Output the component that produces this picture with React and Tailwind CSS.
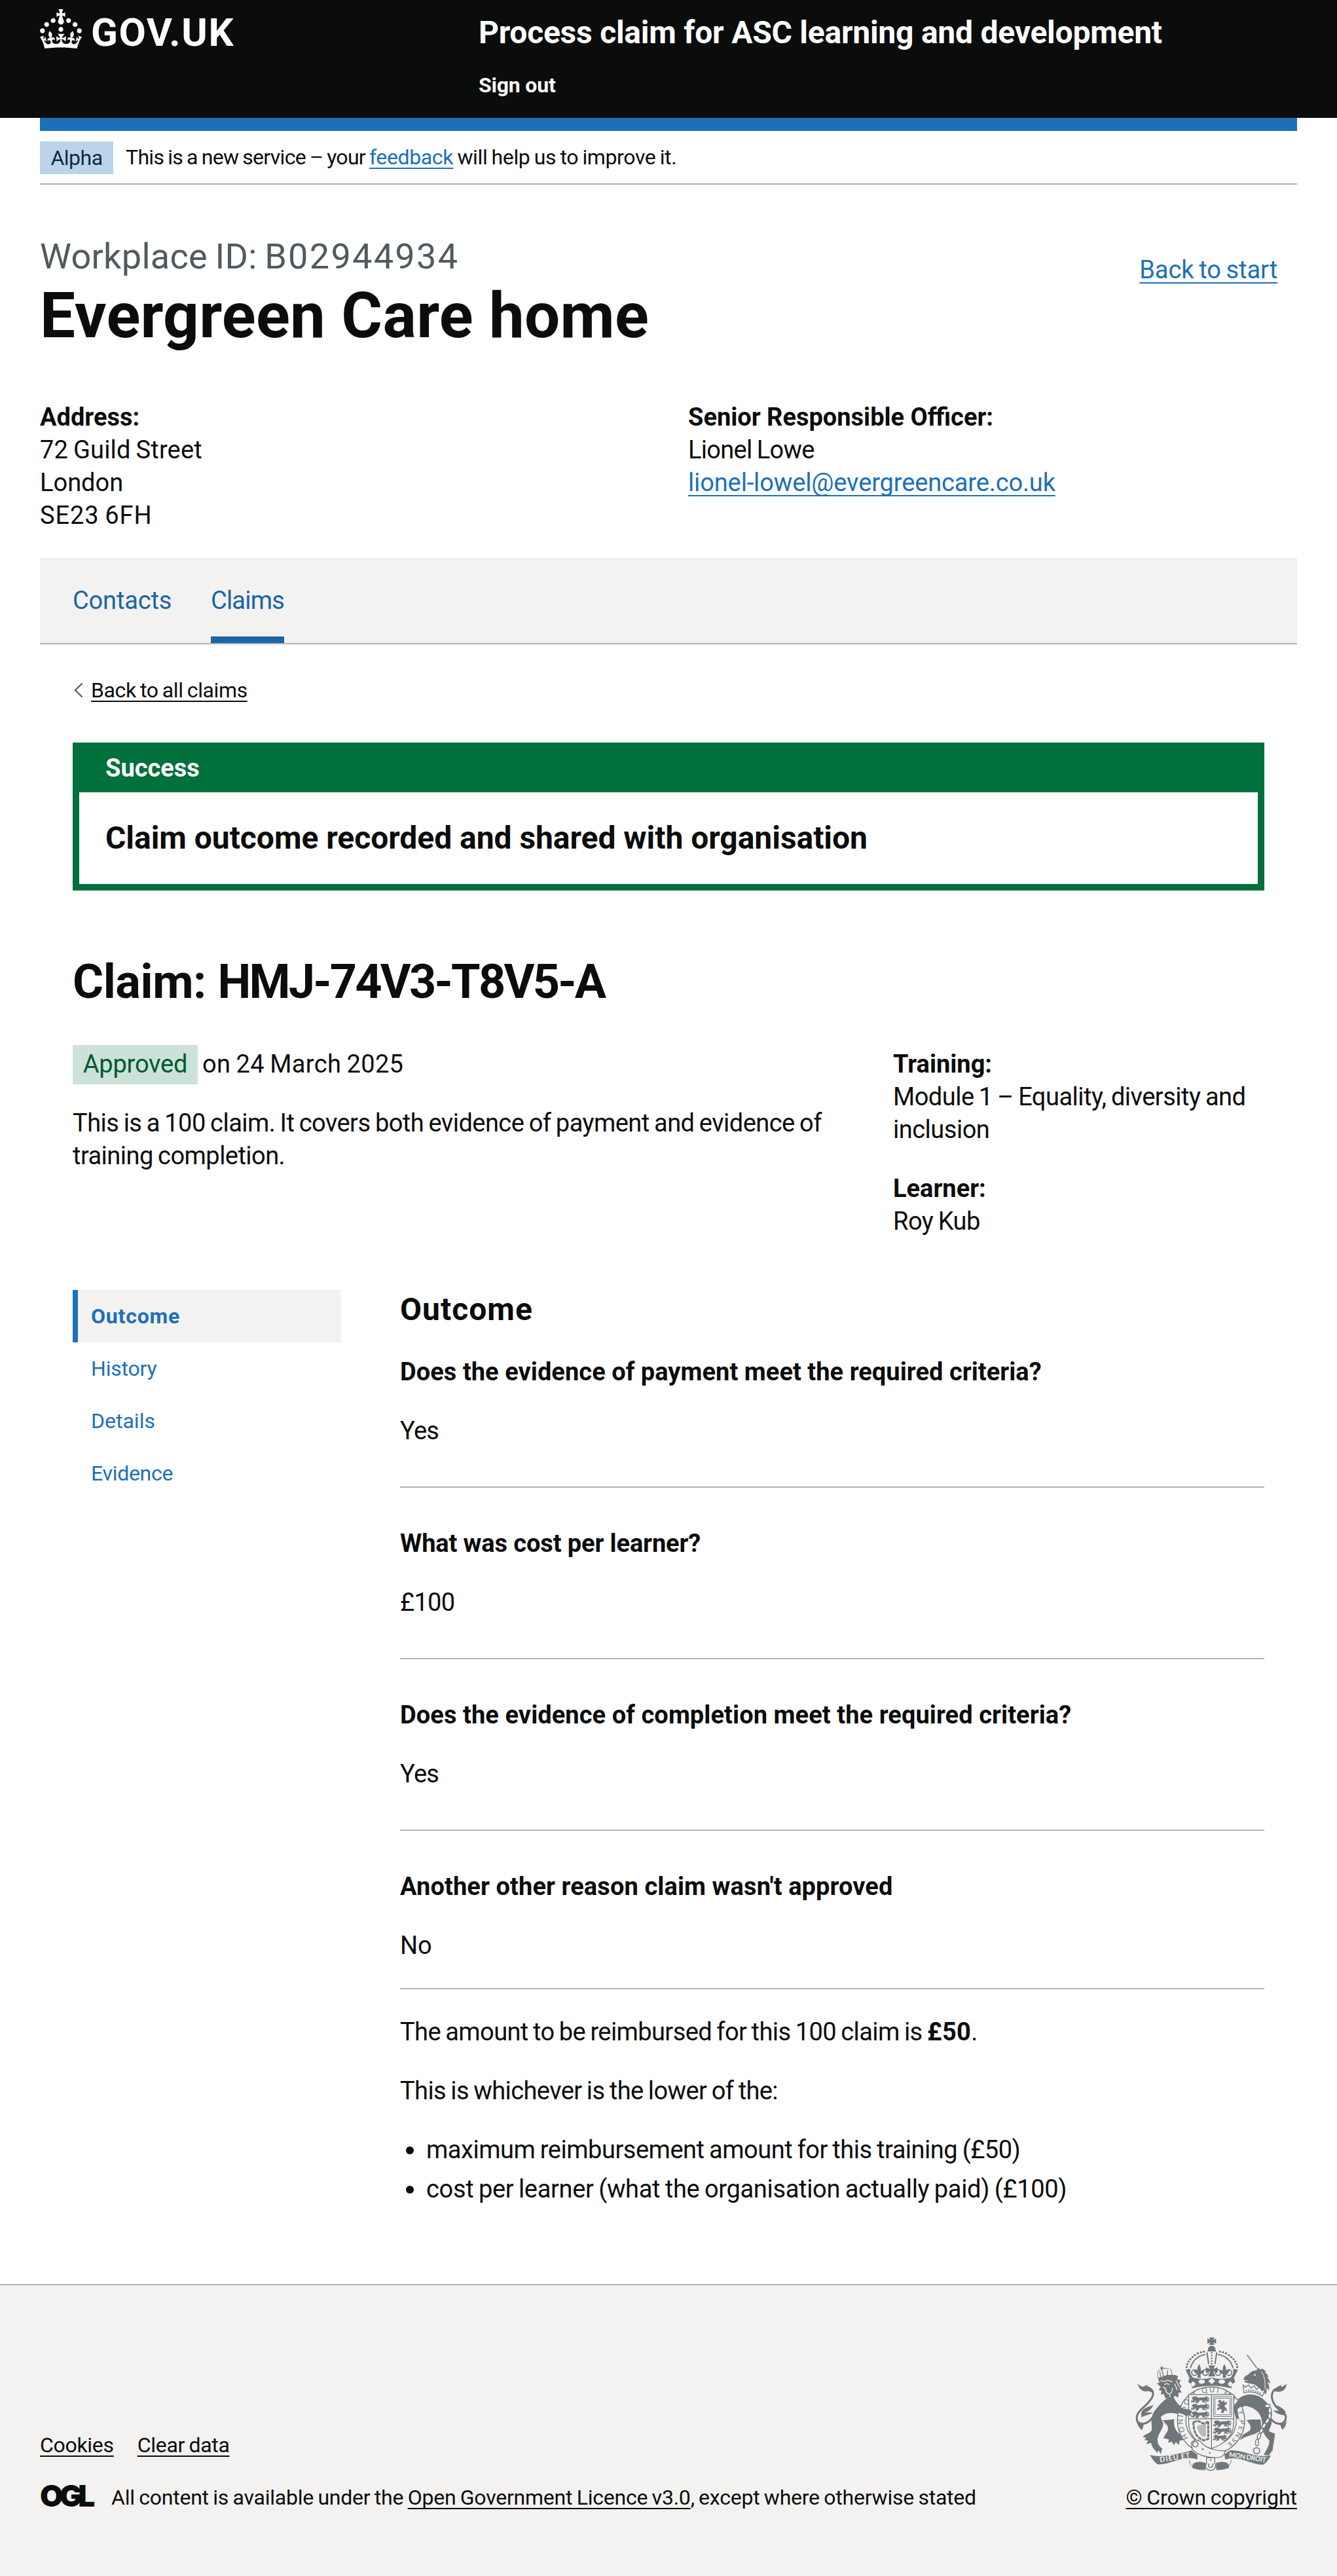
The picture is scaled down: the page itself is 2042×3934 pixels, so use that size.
import React from "react";

const NAV = [
  { label: "History", track: "tracking-[-0.2px]" },
  { label: "Details", track: "tracking-[0px]" },
  { label: "Evidence", track: "tracking-[-0.3px]" },
];

const QUESTIONS = [
  { q: "Does the evidence of payment meet the required criteria?", a: "Yes", track: "tracking-[0.05px]" },
  { q: "What was cost per learner?", a: "£100", track: "tracking-[-0.12px]" },
  { q: "Does the evidence of completion meet the required criteria?", a: "Yes", track: "tracking-[0.08px]" },
];

const LINK = "underline decoration-2 [text-decoration-skip-ink:none]";

function Crown() {
  return (
    <svg viewBox="0 0 32 30" width="64" height="60" fill="currentColor" aria-hidden="true">
      <path d="M22.6 10.4c-1 .4-2-.1-2.4-1-.4-.9.1-2 1-2.4.9-.4 2 .1 2.4 1s-.1 2-1 2.4m-5.9 6.7c-.9.4-2-.1-2.4-1-.4-.9.1-2 1-2.4.9-.4 2 .1 2.4 1s-.1 2-1 2.4m10.8-3.7c-1 .4-2-.1-2.4-1-.4-.9.1-2 1-2.4.9-.4 2 .1 2.4 1s0 2-1 2.4m3.3 4.8c-1 .4-2-.1-2.4-1-.4-.9.1-2 1-2.4.9-.4 2 .1 2.4 1s-.1 2-1 2.4M17 4.7l2.3 1.2V2.5l-2.3.7-.2-.2.9-3h-3.4l.9 3-.2.2c-.1.1-2.3-.7-2.3-.7v3.4L15 4.7c.1.1.1.2.2.2l-1.3 4c-.1.2-.1.4-.1.6 0 1.1.8 2 1.9 2.2h.7c1-.2 1.9-1.1 1.9-2.1 0-.2 0-.4-.1-.6l-1.3-4c-.1-.2 0-.2.1-.3m-7.6 5.7c.9.4 2-.1 2.4-1 .4-.9-.1-2-1-2.4-.9-.4-2 .1-2.4 1s0 2 1 2.4m-5 3c.9.4 2-.1 2.4-1 .4-.9-.1-2-1-2.4-.9-.4-2 .1-2.4 1s.1 2 1 2.4m-3.2 4.8c.9.4 2-.1 2.4-1 .4-.9-.1-2-1-2.4-.9-.4-2 .1-2.4 1s0 2 1 2.4m14.8 11c4.4 0 8.6.3 12.3.8 1.1-4.5 2.4-7 3.7-8.8l-2.5-.9c.2 1.3.3 1.9 0 2.7-.4-.4-.8-1.1-1.1-2.3l-1.2 4c.7-.5 1.3-.8 2-.9-1.1 2.5-2.6 3.1-3.5 3-1.1-.2-1.7-1.2-1.5-2.1.3-1.2 1.5-1.5 2.1-.1 1.1-2.3-.8-3-2-2.3 1.9-1.9 2.1-3.5.6-5.6-2.1 1.6-2.1 3.2-1.2 5.5-1.2-1.4-3.2-.6-2.5 1.6.9-1.4 2.1-.5 1.9.8-.2 1.1-1.7 2.1-3.5 1.9-2.7-.2-2.9-2.1-2.9-3.6.7-.1 1.9.5 2.9 1.9l.4-4.3c-1.1 1.1-2.1 1.4-3.2 1.4.4-1.2 2.1-3 2.1-3h-5.4s1.7 1.9 2.1 3c-1.1 0-2.1-.2-3.2-1.4l.4 4.3c1-1.4 2.2-2 2.9-1.9-.1 1.5-.2 3.4-2.9 3.6-1.9.2-3.4-.8-3.5-1.9-.2-1.3 1-2.2 1.9-.8.7-2.3-1.2-3-2.5-1.6.9-2.2.9-3.9-1.2-5.5-1.5 2-1.3 3.7.6 5.6-1.2-.7-3.1 0-2 2.3.6-1.4 1.8-1.1 2.1.1.2.9-.3 1.9-1.5 2.1-.9.2-2.4-.5-3.5-3 .6 0 1.2.3 2 .9l-1.2-4c-.3 1.1-.7 1.9-1.1 2.3-.3-.8-.2-1.4 0-2.7l-2.9.9C1.3 23 2.6 25.5 3.7 30c3.7-.5 7.9-.8 12.3-.8" />
    </svg>
  );
}

/* One walking lion of the shield's quarters, about 84 units wide. */
function Passant({ x, y }) {
  return (
    <g transform={`translate(${x} ${y})`}>
      <path d="M2 8l8-8 14 0 7 6 12-2 18 0 8-5 7 4-4 6 6 8-8 6-7-5-3 9h-12l5-8-14-1-7 10h-12l6-9-7 1-9 8-7-4 7-7z" />
      <path d="M66 8c6 4 8-6 14-3M4 16l-3 8 7 0M24 20l-3 8h9M60 22l3 5h9M80 6v12l-6 6" fill="none" stroke="#6f777b" strokeWidth="4" />
    </g>
  );
}

function CoatOfArms() {
  const ink = "#6f777b";
  const paper = "#f3f2f1";
  const pearls = [[341, 226], [344, 213], [350, 201], [358, 190], [368, 180], [379, 171], [392, 163], [406, 158], [420, 155]];
  return (
    <svg viewBox="103 88 702 616" width="234" height="205" fill={ink} aria-hidden="true">
      {/* cross and orb */}
      <path d="M443 90h26l-7 12 14-7v24l-14-7 7 12h-26l7-12-14 7V95l14 7z" />
      <path d="M439 145c0-22 34-22 34 0l3 10h-40z" />
      {/* arches */}
      {pearls.map(([x, y]) => (
        <g key={x}>
          <circle cx={x} cy={y} r="5" />
          <circle cx={914 - x} cy={y} r="5" />
        </g>
      ))}
      <path d="M358 230c10-32 34-56 70-62M554 230c-10-32-34-56-70-62" fill="none" stroke={ink} strokeWidth="6" />
      <path d="M434 158l8 54M479 158l-8 54" stroke={ink} strokeWidth="6" />
      <path d="M447 155h18v58h-18z" fill={paper} />
      {[160, 173, 186, 199, 211].map((y) => <circle key={y} cx="456" cy={y} r="4" />)}
      {/* crown rim, fleurs-de-lis and cross */}
      <path d="M336 238l22-4-1 20 12 20q44 12 87 0q44 12 87 0l12-20-1-20 22 4-18 38 6 18-14 10-4 20q-90-24-180 0l-4-20-14-10 6-18z" />
      <circle cx="377" cy="251" r="13" fill={paper} stroke={ink} strokeWidth="5" />
      <circle cx="427" cy="251" r="13" fill={paper} stroke={ink} strokeWidth="5" />
      <circle cx="485" cy="251" r="13" fill={paper} stroke={ink} strokeWidth="5" />
      <circle cx="535" cy="251" r="13" fill={paper} stroke={ink} strokeWidth="5" />
      <path d="M398 213q10 16 8 32 6-10 14-4 4 10-8 14l-8 4 2 16h-16l2-16-8-4q-12-4-8-14 8-6 14 4-2-16 8-32zM514 213q10 16 8 32 6-10 14-4 4 10-8 14l-8 4 2 16h-16l2-16-8-4q-12-4-8-14 8-6 14 4-2-16 8-32z" />
      <path d="M440 219h32l-9 16 20-8v26l-20-8 9 24h-32l9-24-20 8v-26l20 8z" />
      <g fill={paper}>
        <ellipse cx="410" cy="293" rx="15" ry="10" />
        <ellipse cx="502" cy="293" rx="15" ry="10" />
        <path d="M456 276l16 14-16 14-16-14zM371 290l12 14-14 14-9-16zM541 290l-12 14 14 14 9-16z" />
      </g>

      {/* lion */}
      <path d="M184 458C160 492 128 492 114 474C104 440 130 424 152 402C180 376 196 348 180 330C172 320 156 316 144 318" fill="none" stroke={ink} strokeWidth="9" />
      <path d="M116 300Q128 316 142 316L164 306L156 318Q184 326 190 350Q172 332 150 338Q120 332 116 300zM132 436C144 410 164 412 188 400C180 420 164 430 150 434L186 434C170 448 148 444 134 458zM108 462Q120 484 146 484L136 516Q114 500 108 462z" />
      <path d="M252 366C222 394 196 418 184 446C174 474 184 498 180 516C172 534 148 530 140 548L156 550L146 562L164 562L156 580L178 574C182 598 196 606 206 620L212 608L222 626L226 610L230 600C214 590 204 574 208 552C214 526 230 514 234 486L222 456C240 434 276 432 300 442L330 452L352 448L362 430L342 420C316 410 296 396 282 366z" />
      <path d="M230 470L284 466C280 494 288 514 304 530L330 542L318 552L328 560L308 564L306 584L292 570L282 584L272 568L256 574L260 558L234 552L246 530C256 522 258 508 252 494z" />
      <path d="M204 300L216 298L210 278L250 262L290 262L302 270L296 280L314 288L306 300L318 316L308 324L318 344L304 342L302 366L286 358L276 374L260 366L242 368L236 350L222 352L226 336L212 330L222 318z" />
      <path d="M220 288L240 292L254 286L276 294M238 306L250 302L262 306M232 318L242 322L248 340Q258 356 272 342L276 322M286 302L298 332M292 288L308 318M262 350L266 364" fill="none" stroke={paper} strokeWidth="4" />
      <path d="M210 274C206 256 208 244 216 240M272 262C274 248 270 238 262 234M222 238C230 230 250 230 260 236" fill="none" stroke={ink} strokeWidth="5" strokeDasharray="5 3" />
      <path d="M227 220V244M219 230H235M230 244L234 270M222 272L218 248M252 264L254 242" stroke={ink} strokeWidth="4" fill="none" />
      <path d="M209 276L270 261L272 269L212 285z" />

      {/* unicorn */}
      <path d="M619 171L664 232" stroke={ink} strokeWidth="6" strokeDasharray="7 2" />
      <path d="M602 282Q606 266 620 262L640 246L662 240L672 228L680 242Q702 256 704 290Q706 318 696 338L680 332Q668 312 646 304L622 300Q606 296 604 290L628 288L606 286z" />
      <path d="M682 234Q700 236 706 250L696 248Q714 258 718 274L706 268Q724 286 724 302L710 292Q724 316 718 332L706 320Q712 340 702 352L694 340Q704 280 676 246z" />
      <path d="M684 246Q706 278 700 334" fill="none" stroke={paper} strokeWidth="3" />
      <circle cx="654" cy="262" r="4" fill={paper} />
      <path d="M600 308L612 318L624 308L636 322L650 312L662 328L676 318L686 334L700 330L688 360Q650 330 604 344z" fill={paper} stroke={ink} strokeWidth="4" />
      <path d="M612 334Q650 326 684 348" fill="none" stroke={ink} strokeWidth="5" strokeDasharray="6 5" />
      <path d="M560 402C568 374 594 356 626 352C676 348 712 384 730 424C738 452 728 468 712 480L688 484C684 452 676 430 638 412C614 402 586 398 578 418C584 440 588 454 578 474L564 464C558 444 558 422 560 402z" />
      <path d="M616 470C640 464 660 468 680 466L684 510C664 540 622 534 584 562L598 538L632 516C638 500 632 486 616 470z" />
      <path d="M690 470L730 464C736 488 722 504 718 520L746 532C744 562 738 580 736 606L718 632L694 630C704 608 722 590 720 562C702 546 692 528 684 502z" />
      <path d="M722 456C744 492 782 496 794 468C806 434 768 432 750 406C734 386 724 356 740 334C750 320 768 324 780 320" fill="none" stroke={ink} strokeWidth="9" />
      <path d="M800 303Q796 340 760 340L740 336Q756 314 776 308L774 320zM796 432Q776 404 740 398Q752 418 768 426L738 426Q756 444 790 448zM800 470Q790 490 768 486L780 514Q798 500 800 470z" />
      <g fill={paper} stroke={ink} strokeWidth="4">
        <ellipse cx="712" cy="404" rx="12" ry="8" />
        <ellipse cx="723" cy="425" rx="7" ry="13" />
        <ellipse cx="722" cy="450" rx="7" ry="13" />
        <ellipse cx="711" cy="473" rx="7" ry="13" transform="rotate(28 711 473)" />
        <ellipse cx="696" cy="495" rx="7" ry="13" transform="rotate(28 696 495)" />
        <ellipse cx="684" cy="518" rx="7" ry="12" transform="rotate(20 684 518)" />
        <ellipse cx="673" cy="543" rx="7" ry="14" transform="rotate(20 673 543)" />
        <ellipse cx="664" cy="573" rx="7" ry="15" />
      </g>

      {/* garter with its motto */}
      <circle cx="453" cy="471" r="154" fill={paper} stroke={ink} strokeWidth="4" />
      <circle cx="453" cy="471" r="116" fill="none" stroke={ink} strokeWidth="4" />
      <defs>
        <path id="garter" d="M350 550A130 130 0 1 1 520 583" />
      </defs>
      <text fontFamily="Lato, sans-serif" fontSize="33" fontWeight="400" fill={ink}>
        <textPath href="#garter" textLength="620">HONI SOIT QUI MAL Y PENSE</textPath>
      </text>

      {/* shield */}
      <path d="M350 352h207v128c0 64-50 104-103 120-54-16-104-56-104-120z" fill={paper} stroke={ink} strokeWidth="4" />
      <path d="M455 352v248M350 463h207" stroke={ink} strokeWidth="4" />
      <Passant x={362} y={361} />
      <Passant x={362} y={395} />
      <Passant x={362} y={430} />
      <Passant x={463} y={471} />
      <Passant x={463} y={504} />
      <g transform="translate(463 537) scale(.75 .92)">
        <Passant x={0} y={0} />
      </g>
      <path d="M464 361h83v92h-83zM471 369h69v76h-69z" fill="none" stroke={ink} strokeWidth="3" />
      <path d="M484 382l12-6 6 10 10-8 4 12 12-6-6 14-10 6 10 10 6 16-12-6-8 14-10-4 6-12-12-4-10 8-2-10 12-8-10-6 4-8 10 4z" />
      <path d="M372 480Q392 468 408 480T440 474V556L420 562Q372 548 372 480z" fill="none" stroke={ink} strokeWidth="9" strokeDasharray="16 3" />
      <path d="M388 496L430 486V542L418 548Q392 532 388 496z" opacity=".45" />

      {/* forelegs resting on the shield */}
      <path d="M278 396L330 418L358 422L368 432L358 440L364 450L346 446L340 452L328 444L284 428z" />
      <path d="M560 402C564 392 578 374 590 374L610 378L604 408C582 408 578 414 574 424L582 468L568 458C560 440 556 422 560 402z" />

      {/* belt and buckle */}
      <path d="M362 578c4-20 34-22 46-6 22 26 58 38 110 38-2 22-20 32-46 32-48-2-80-14-104-36z" fill={paper} stroke={ink} strokeWidth="4" />
      <circle cx="381" cy="580" r="12" fill="none" stroke={ink} strokeWidth="5" />
      <circle cx="415" cy="603" r="4" />
      <circle cx="447" cy="620" r="4" />

      {/* motto ribbon */}
      <path d="M172 630Q216 640 280 628T362 608L390 628V650Q350 636 290 656T206 672Q190 660 172 630zM728 632Q684 640 630 624T540 608L514 628L518 650Q556 636 620 658T696 672Q712 660 728 632z" />
      <path d="M368 690c-8-28 28-34 60-24v28c-20 4-42 2-60-4zM534 690c8-28-24-34-58-24v28c20 4 40 2 58-4z" />
      <path d="M354 652c0 26 12 46 74 46M546 652c-4 26-20 46-70 46" fill="none" stroke={ink} strokeWidth="3" />
      <path d="M432 642h38v26c10 16-2 32-19 32s-30-16-19-32z" fill={paper} stroke={ink} strokeWidth="4" />
      <path d="M441 668c-4 26 24 26 20 0" fill="none" stroke={ink} strokeWidth="5" />
      <circle cx="451" cy="652" r="4" />
      <g fontFamily="Lato, sans-serif" fontWeight="700" fill={paper}>
        <text x="219" y="663" fontSize="33" textLength="140" transform="rotate(-9 219 663)">DIEU ET</text>
        <text x="534" y="637" fontSize="31" textLength="172" transform="rotate(9 534 637)">MON DROIT</text>
      </g>
      <circle cx="662" cy="610" r="14" fill="none" stroke={ink} strokeWidth="5" />
    </svg>
  );
}

function Header() {
  return (
    <header className="h-[180px] bg-[#0b0c0c] text-white">
      <div className="mx-[61px] flex">
        <div className="flex w-[670px] items-start pt-[14px]">
          <Crown />
          <span className="ml-[14px] text-[60px] font-bold leading-[72px] tracking-[1.6px]">GOV.UK</span>
        </div>
        <div className="pt-5 font-bold">
          <div className="text-[48px] leading-[60px] tracking-[-0.24px]">Process claim for ASC learning and development</div>
          <a className="mt-[30px] block text-[32px] leading-10 tracking-[-0.2px]">Sign out</a>
        </div>
      </div>
    </header>
  );
}

function PhaseBanner() {
  return (
    <div className="mx-[61px] border-b-2 border-[#b1b4b6]">
      <div className="h-5 bg-[#1d70b8]" />
      <div className="mt-4 mb-[14px] flex h-[50px] items-center text-[32px] [word-spacing:-0.04em]">
        <span className="flex h-[50px] w-[112px] items-center justify-center bg-[#bbd4ea] leading-[48px] tracking-[-0.5px] text-[#0c2d4a]">
          <span className="-mt-px">Alpha</span>
        </span>
        <span className="ml-[19px] -mt-[2px] leading-10 tracking-[-0.37px]">
          <span className="tracking-[-0.7px]">This is a new service – your </span>
          <a className={`${LINK} underline-offset-[5px] text-[#1d70b8]`}>feedback</a> will help us to improve it.
        </span>
      </div>
    </div>
  );
}

function Footer() {
  return (
    <footer className="mt-[120px] h-[446px] border-t-2 border-[#b1b4b6] bg-[#f3f2f1] px-[61px] text-[32px] leading-10 [word-spacing:-0.04em]">
      <div className="flex justify-between">
        <div className="pt-[224px]">
          <div className="flex gap-[36px]">
            <a className={`${LINK} underline-offset-[5px] tracking-[-0.3px]`}>Cookies</a>
            <a className={`${LINK} underline-offset-[5px] tracking-[-0.3px]`}>Clear data</a>
          </div>
          <div className="mt-10 flex">
            <span className="w-[109px] font-[Inter] text-[46px] font-black leading-[34px] tracking-[-6px]">OGL</span>
            <span className="tracking-[-0.23px]">
              All content is available under the <a className={`${LINK} underline-offset-[5px]`}>Open Government Licence v3.0</a>, except where otherwise stated
            </span>
          </div>
        </div>
        <div className="flex flex-col items-center pt-[79px]">
          <CoatOfArms />
          <a className={`${LINK} mt-[20px] underline-offset-[5px] tracking-[-0.05px]`}>© Crown copyright</a>
        </div>
      </div>
    </footer>
  );
}

export default function App() {
  return (
    <div className="w-[2042px] bg-white font-[Roboto,sans-serif] text-[38px] leading-[50px] text-[#0b0c0c]">
      <Header />
      <PhaseBanner />

      <main className="mx-[61px]">
        <div className="flex justify-between">
          <div className="pt-20">
            <div className="text-[54px] leading-[60px] tracking-[0.3px] [word-spacing:-0.04em] text-[#505a5f]">
              Workplace ID: <span className="tracking-[2.3px]">B02944934</span>
            </div>
            <h1 className="mt-[10px] text-[96px] font-bold leading-[100px] tracking-[0.3px]">Evergreen Care home</h1>
          </div>
          <div className="pt-[105px] pr-[30px]">
            <a className={`${LINK} underline-offset-[6px] tracking-[-0.1px] [word-spacing:-0.04em] text-[#1d70b8]`}>Back to start</a>
          </div>
        </div>

        <div className="mt-20 grid grid-cols-2 gap-[60px] [word-spacing:-0.04em]">
          <div>
            <div className="font-bold">Address:</div>
            <div className="tracking-[0.15px]">72 Guild Street</div>
            <div>London</div>
            <div className="tracking-[0.9px]">SE23 6FH</div>
          </div>
          <div>
            <div className="font-bold [word-spacing:0]">Senior Responsible Officer:</div>
            <div className="tracking-[-0.7px]">Lionel Lowe</div>
            <a className={`${LINK} block underline-offset-[6px] tracking-[-0.13px] text-[#1d70b8]`}>lionel-lowel@evergreencare.co.uk</a>
          </div>
        </div>

        <nav className="mt-10 flex gap-[60px] border-b-2 border-[#b1b4b6] bg-[#f3f2f1] pl-[50px] text-[#1a65a6]">
          <a className="w-[151px] py-10 tracking-[-0.15px]">Contacts</a>
          <a className="w-[112px] border-b-[10px] border-[#1a65a6] pt-10 pb-[30px] tracking-[-0.8px]">Claims</a>
        </nav>

        <div className="mx-[50px]">
          <div className="mt-[50px] flex items-center text-[32px] leading-10 [word-spacing:-0.04em]">
            <svg viewBox="0 0 14 24" width="14" height="24" className="ml-[2px] mr-[12px]" fill="none" stroke="#505a5f" strokeWidth="2.2" aria-hidden="true">
              <path d="M12.5 1.5L2 12l10.500 10.500" />
            </svg>
            <a className={`${LINK} underline-offset-[5px] tracking-[-0.4px]`}>Back to all claims</a>
          </div>

          <section className="mt-[60px] h-[226px] border-[10px] border-[#00703c] font-bold">
            <div className="h-[66px] bg-[#00703c] pt-[4px] pl-10 text-white">Success</div>
            <div className="px-10 py-10 text-[48px] leading-[60px] tracking-[-0.04px]">Claim outcome recorded and shared with organisation</div>
          </section>

          <h2 className="mt-[100px] text-[72px] font-bold leading-20 tracking-[-0.4px]">
            Claim: <span className="tracking-[-2.8px]">HMJ-74V3-T8V5-A</span>
          </h2>

          <div className="mt-14 flex justify-between">
            <div className="w-[1193px] [word-spacing:-0.04em]">
              <div className="flex h-[60px] items-center">
                <span className="mr-[7px] flex h-[60px] w-[191px] items-center justify-center bg-[#cce2d8] pb-[2px] tracking-[-0.2px] text-[#005a30]">Approved</span>
                <span className="-mt-[2px] tracking-[0.35px]">on 24 March 2025</span>
              </div>
              <p className="mt-[34px] tracking-[-0.54px]">This is a 100 claim. It covers both evidence of payment and evidence of training completion.</p>
            </div>
            <div className="w-[567px] pt-1 [word-spacing:-0.04em]">
              <div className="font-bold">Training:</div>
              <div className="tracking-[-0.5px]">Module 1 – Equality, diversity and inclusion</div>
              <div className="mt-10 font-bold">Learner:</div>
              <div className="tracking-[-0.5px]">Roy Kub</div>
            </div>
          </div>

          <div className="mt-20 flex">
            <nav className="mr-[90px] w-[410px] text-[32px] leading-20 text-[#1d70b8]">
              <a className="block border-l-8 border-[#1d70b8] bg-[#f3f2f1] pl-5 font-bold tracking-[0.8px]">Outcome</a>
              {NAV.map((n) => (
                <a key={n.label} className={`block pl-7 ${n.track}`}>{n.label}</a>
              ))}
            </nav>

            <div className="flex-1 [word-spacing:-0.04em]">
              <h3 className="mb-10 text-[48px] font-bold leading-[60px] tracking-[1px]">Outcome</h3>
              {QUESTIONS.map((item) => (
                <div key={item.q} className="mb-[60px] border-b-2 border-[#b1b4b6] pb-[60px]">
                  <div className={`font-bold [word-spacing:0] ${item.track}`}>{item.q}</div>
                  <div className="mt-10 tracking-[-0.7px]">{item.a}</div>
                </div>
              ))}
              <div className="border-b-2 border-[#b1b4b6] pb-10">
                <div className="font-bold tracking-[0.1px] [word-spacing:0]">Another other reason claim wasn't approved</div>
                <div className="mt-10">No</div>
              </div>
              <p className="mt-10 tracking-[-0.6px]">
                The amount to be reimbursed for this 100 claim is <strong className="tracking-[0.4px]">£50</strong>.
              </p>
              <p className="mt-10 tracking-[-0.6px]">This is whichever is the lower of the:</p>
              <ul className="mt-10 space-y-[10px]">
                <li className="flex items-center tracking-[-0.48px]">
                  <span className="mr-[19px] ml-[9px] mt-[2px] size-3 rounded-full bg-[#0b0c0c]" />
                  maximum reimbursement amount for this training (£50)
                </li>
                <li className="flex items-center tracking-[-0.32px]">
                  <span className="mr-[19px] ml-[9px] mt-[2px] size-3 rounded-full bg-[#0b0c0c]" />
                  cost per learner (what the organisation actually paid) (£100)
                </li>
              </ul>
            </div>
          </div>
        </div>
      </main>

      <Footer />
    </div>
  );
}
